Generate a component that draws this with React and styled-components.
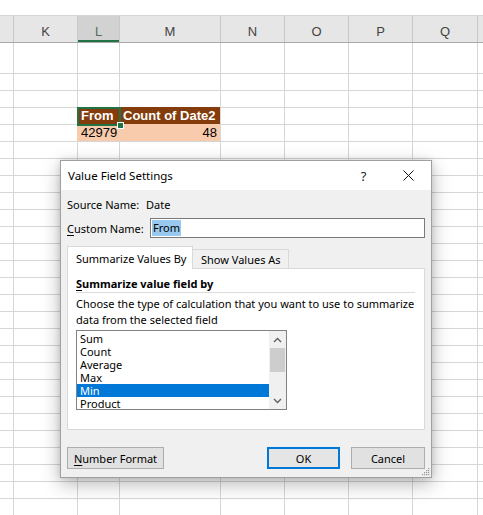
import React from 'react'
import styled, { createGlobalStyle, css } from 'styled-components'

const COLS = [13, 64, 42, 101, 64, 64, 64, 65, 6]
const LETTERS = ['', 'K', 'L', 'M', 'N', 'O', 'P', 'Q', '']
const ROW_COUNT = 27
const SELECTED_COL = 2
const PIVOT_ROW = 3

const LIST_ITEMS = ['Sum', 'Count', 'Average', 'Max', 'Min', 'Product']

const gridColumns = COLS.map(c => `${c}px`).join(' ')

const GlobalStyle = createGlobalStyle`
  html, body {
    margin: 0;
    padding: 0;
    background: #ffffff;
  }
  body {
    font-family: 'Liberation Sans', Arial, sans-serif;
  }
`

const Screen = styled.div`
  position: relative;
  width: 483px;
  height: 515px;
  overflow: hidden;
  background: #ffffff;
`

const FormulaStrip = styled.div`
  height: 16px;
  box-sizing: border-box;
  border-bottom: 1px solid #d4d4d4;
  background: #ffffff;
`

const ColumnHeader = styled.div`
  display: grid;
  grid-template-columns: ${gridColumns};
  height: 27px;
  box-sizing: border-box;
  background: #e6e6e6;
  border-bottom: 1px solid #a8a8a8;
`

const HeaderCell = styled.div`
  display: flex;
  align-items: flex-end;
  justify-content: center;
  padding-bottom: 3px;
  box-sizing: border-box;
  font-size: 13px;
  color: #444444;
  border-left: ${({ $first }) => ($first ? 'none' : '1px solid #c9c9c9')};

  ${({ $selected }) =>
    $selected &&
    css`
      background: #d2d2d2;
      color: #5a6b60;
      box-shadow: inset 0 -2px 0 #217346;
    `}
`

const Sheet = styled.div`
  display: grid;
  grid-template-columns: ${gridColumns};
  grid-template-rows: 30px repeat(${ROW_COUNT - 1}, 17px);
`

const Cell = styled.div`
  position: relative;
  box-sizing: border-box;
  padding: 0 3px;
  font-size: 13px;
  line-height: 16px;
  white-space: nowrap;
  color: #000000;
  border-left: ${({ $col }) => ($col === 0 ? 'none' : '1px solid #d6d6d6')};
  border-top: ${({ $row }) => ($row === 0 ? 'none' : '1px solid #d6d6d6')};
  text-align: ${({ $align }) => $align || 'left'};

  ${({ $kind }) =>
    $kind === 'head' &&
    css`
      background: #843c0c;
      border-color: #843c0c;
      color: #ffffff;
      font-weight: bold;
    `}

  ${({ $kind }) =>
    $kind === 'value' &&
    css`
      background: #f8cbad;
      border-color: #f8cbad;
    `}
`

const Selection = styled.div`
  position: absolute;
  z-index: 2;
  left: -1px;
  top: -1px;
  right: -2px;
  bottom: -2px;
  border: 2px solid #217346;
  pointer-events: none;

  &::after {
    content: '';
    position: absolute;
    right: -5px;
    bottom: -5px;
    width: 5px;
    height: 5px;
    background: #217346;
    border: 1px solid #ffffff;
  }
`

/* dialog */

const Dialog = styled.div`
  position: absolute;
  z-index: 5;
  left: 60px;
  top: 160px;
  width: 372px;
  height: 318px;
  box-sizing: border-box;
  display: flex;
  flex-direction: column;
  background: #f0f0f0;
  border: 1px solid #a0a0a0;
  box-shadow: 0 6px 18px rgba(0, 0, 0, 0.28), 0 0 6px rgba(0, 0, 0, 0.12);
  font-family: 'Noto Sans', 'Segoe UI', sans-serif;
  font-size: 11px;
  color: #000000;
`

const TitleBar = styled.div`
  display: flex;
  align-items: center;
  height: 29px;
  padding-left: 7px;
  background: #ffffff;
`

const Title = styled.div`
  flex: 1;
  font-size: 11.5px;
`

const TitleButton = styled.div`
  width: 45px;
  height: 29px;
  display: flex;
  align-items: center;
  justify-content: center;
  font-size: 13px;
  color: #222222;
`

const Body = styled.div`
  flex: 1;
  display: flex;
  flex-direction: column;
  padding: 0 6px 0 6px;
`

const FieldRow = styled.div`
  display: flex;
  align-items: center;
  height: ${({ $h }) => $h || 16}px;
  margin-top: ${({ $mt }) => $mt || 0}px;
  white-space: nowrap;
`

const FieldLabel = styled.span`
  width: ${({ $w }) => $w}px;
  flex-shrink: 0;
`

const Key = styled.span`
  text-decoration: underline;
  text-underline-offset: 2px;
`

const TextInput = styled.div`
  display: flex;
  align-items: center;
  width: 275px;
  height: 20px;
  box-sizing: border-box;
  padding-left: 1px;
  background: #ffffff;
  border: 1px solid #7a7a7a;
`

const SelectedText = styled.span`
  background: #99c9ef;
  padding: 0 1px;
  line-height: 16px;
`

const TabStrip = styled.div`
  display: flex;
  align-items: flex-end;
  height: 22px;
  margin-top: 8px;
  position: relative;
  z-index: 1;
`

const Tab = styled.div`
  box-sizing: border-box;
  display: flex;
  align-items: center;
  white-space: nowrap;
  border: 1px solid #d9d9d9;
  border-bottom: none;
  padding: 0 7px 0 8px;

  ${({ $active }) =>
    $active
      ? css`
          height: 23px;
          margin-bottom: -1px;
          width: 126px;
          background: #ffffff;
        `
      : css`
          height: 19px;
          width: 96px;
          background: #f0f0f0;
          border-left: none;
        `}
`

const TabPanel = styled.div`
  height: 162px;
  box-sizing: border-box;
  padding: 7px 9px 0 8px;
  background: #ffffff;
  border: 1px solid #d9d9d9;
`

const SectionTitle = styled.div`
  font-weight: bold;
  line-height: 16px;
  border-bottom: 1px solid #dcdcdc;
`

const Description = styled.div`
  margin-top: 3px;
  line-height: 16px;
  white-space: nowrap;
`

const ListBox = styled.div`
  display: flex;
  width: 211px;
  height: 80px;
  margin-top: 2px;
  box-sizing: border-box;
  border: 1px solid #828282;
  background: #ffffff;
`

const Items = styled.div`
  width: 192px;
  padding-top: 1px;
`

const Item = styled.div`
  height: 13px;
  line-height: 13px;
  font-size: 11px;
  padding-left: 3px;
  ${({ $selected }) =>
    $selected &&
    css`
      background: #0078d7;
      color: #ffffff;
    `}
`

const ScrollBar = styled.div`
  width: 17px;
  display: flex;
  flex-direction: column;
  background: #f0f0f0;
`

const ScrollArrow = styled.div`
  height: 17px;
  display: flex;
  align-items: center;
  justify-content: center;
`

const ScrollTrack = styled.div`
  flex: 1;
`

const ScrollThumb = styled.div`
  height: 24px;
  margin: 0 1px;
  background: #cdcdcd;
`

const ButtonRow = styled.div`
  display: flex;
  align-items: center;
  gap: 11px;
  margin-top: 17px;
`

const Button = styled.div`
  box-sizing: border-box;
  width: ${({ $w }) => $w}px;
  height: 22px;
  display: flex;
  align-items: center;
  justify-content: center;
  background: #e1e1e1;
  border: 1px solid #adadad;
  white-space: nowrap;

  ${({ $default }) =>
    $default &&
    css`
      border: 2px solid #0078d7;
      background: #e5e5e5;
    `}
`

const Spacer = styled.div`
  flex: 1;
`

const Grip = styled.svg`
  position: absolute;
  right: 1px;
  bottom: 1px;
`

function Chevron({ up }) {
  return (
    <svg width="9" height="6" viewBox="0 0 9 6">
      <path
        d={up ? 'M1 5 L4.5 1.5 L8 5' : 'M1 1 L4.5 4.5 L8 1'}
        fill="none"
        stroke="#606060"
        strokeWidth="1.4"
      />
    </svg>
  )
}

function pivotCell(row, col) {
  if (row === PIVOT_ROW && col === 2) return { kind: 'head', text: 'From' }
  if (row === PIVOT_ROW && col === 3) return { kind: 'head', text: 'Count of Date2' }
  if (row === PIVOT_ROW + 1 && col === 2) return { kind: 'value', text: '42979' }
  if (row === PIVOT_ROW + 1 && col === 3) return { kind: 'value', text: '48', align: 'right' }
  return null
}

function Spreadsheet() {
  const cells = []
  for (let r = 0; r < ROW_COUNT; r++) {
    for (let c = 0; c < COLS.length; c++) {
      const p = pivotCell(r, c)
      cells.push(
        <Cell key={`${r}-${c}`} $row={r} $col={c} $kind={p && p.kind} $align={p && p.align}>
          {p && p.text}
          {r === PIVOT_ROW && c === SELECTED_COL && <Selection />}
        </Cell>
      )
    }
  }

  return (
    <>
      <FormulaStrip />
      <ColumnHeader>
        {LETTERS.map((l, i) => (
          <HeaderCell key={i} $first={i === 0} $selected={i === SELECTED_COL}>
            {l}
          </HeaderCell>
        ))}
      </ColumnHeader>
      <Sheet>{cells}</Sheet>
    </>
  )
}

function ValueFieldSettings() {
  return (
    <Dialog>
      <TitleBar>
        <Title>Value Field Settings</Title>
        <TitleButton>?</TitleButton>
        <TitleButton>
          <svg width="11" height="11" viewBox="0 0 11 11">
            <path d="M0.5 0.5 L10.5 10.5 M10.5 0.5 L0.5 10.5" stroke="#111" strokeWidth="1" />
          </svg>
        </TitleButton>
      </TitleBar>
      <Body>
        <FieldRow $mt={6}>
          <FieldLabel $w={79}>Source Name:</FieldLabel>
          <span>Date</span>
        </FieldRow>
        <FieldRow $mt={6} $h={20}>
          <FieldLabel $w={83}>
            <Key>C</Key>ustom Name:
          </FieldLabel>
          <TextInput>
            <SelectedText>From</SelectedText>
          </TextInput>
        </FieldRow>

        <TabStrip>
          <Tab $active>Summarize Values By</Tab>
          <Tab>Show Values As</Tab>
        </TabStrip>
        <TabPanel>
          <SectionTitle>
            <Key>S</Key>ummarize value field by
          </SectionTitle>
          <Description>
            Choose the type of calculation that you want to use to summarize
            <br />
            data from the selected field
          </Description>
          <ListBox>
            <Items>
              {LIST_ITEMS.map(item => (
                <Item key={item} $selected={item === 'Min'}>
                  {item}
                </Item>
              ))}
            </Items>
            <ScrollBar>
              <ScrollArrow>
                <Chevron up />
              </ScrollArrow>
              <ScrollTrack>
                <ScrollThumb />
              </ScrollTrack>
              <ScrollArrow>
                <Chevron />
              </ScrollArrow>
            </ScrollBar>
          </ListBox>
        </TabPanel>

        <ButtonRow>
          <Button $w={97}>
            <span>
              <Key>N</Key>umber Format
            </span>
          </Button>
          <Spacer />
          <Button $w={73} $default>
            OK
          </Button>
          <Button $w={74}>Cancel</Button>
        </ButtonRow>
      </Body>
      <Grip width="10" height="10" viewBox="0 0 10 10">
        <g fill="#9a9a9a">
          <rect x="8" y="2" width="1.2" height="1.2" />
          <rect x="6" y="4" width="1.2" height="1.2" />
          <rect x="8" y="4" width="1.2" height="1.2" />
          <rect x="4" y="6" width="1.2" height="1.2" />
          <rect x="6" y="6" width="1.2" height="1.2" />
          <rect x="8" y="6" width="1.2" height="1.2" />
          <rect x="2" y="8" width="1.2" height="1.2" />
          <rect x="4" y="8" width="1.2" height="1.2" />
          <rect x="6" y="8" width="1.2" height="1.2" />
          <rect x="8" y="8" width="1.2" height="1.2" />
        </g>
      </Grip>
    </Dialog>
  )
}

export default function App() {
  return (
    <Screen>
      <GlobalStyle />
      <Spreadsheet />
      <ValueFieldSettings />
    </Screen>
  )
}
